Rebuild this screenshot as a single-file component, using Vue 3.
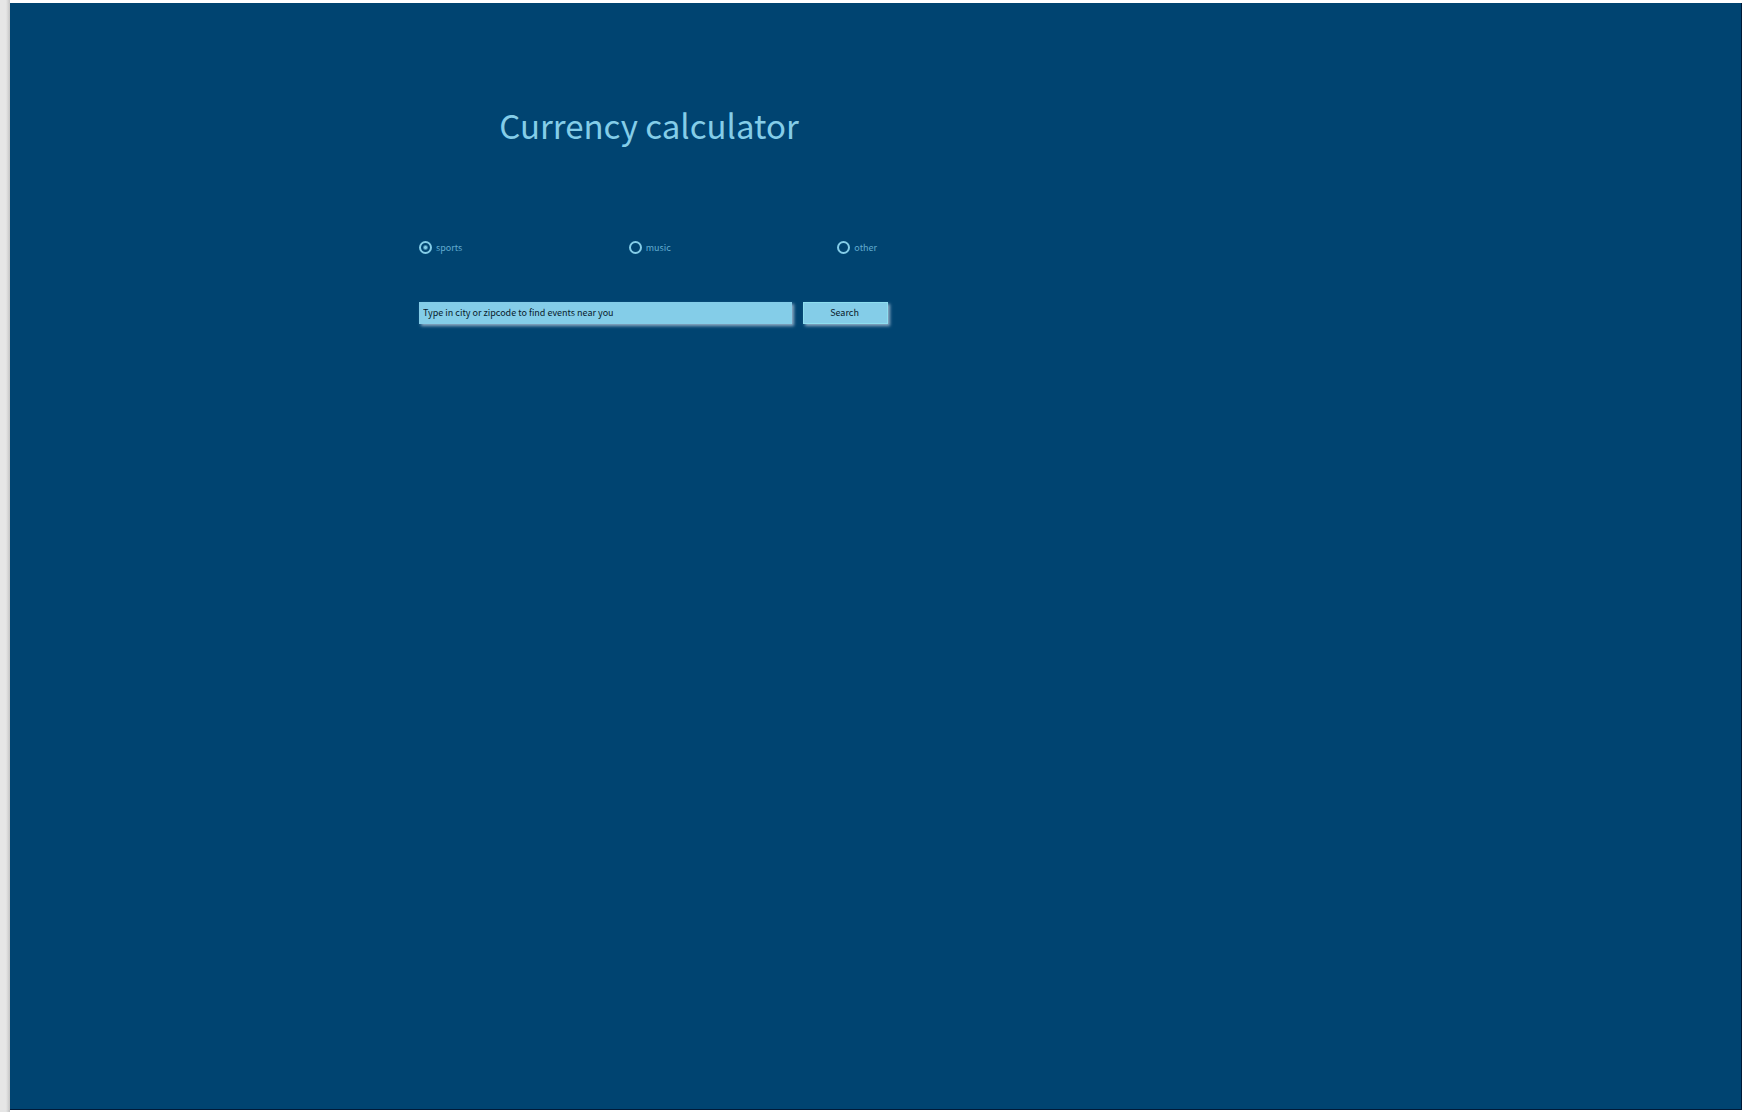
<script setup>
import { ref } from 'vue'

const categories = ['sports', 'music', 'other']
const category = ref('sports')
const place = ref('')
</script>

<template>
  <div class="desk">
    <main class="page">
      <form class="finder" @submit.prevent>
        <h1>Currency calculator</h1>
        <div class="choices" role="radiogroup" aria-label="Event type">
          <label v-for="item in categories" :key="item">
            <input v-model="category" type="radio" name="category" :value="item" />
            <span>{{ item }}</span>
          </label>
        </div>
        <div class="search">
          <input
            v-model="place"
            type="text"
            aria-label="City or zipcode"
            placeholder="Type in city or zipcode to find events near you"
          />
          <button type="submit">Search</button>
        </div>
      </form>
    </main>
  </div>
</template>

<style>
body {
  margin: 0;
}
</style>

<style scoped>
.desk {
  box-sizing: border-box;
  display: flex;
  min-height: 100vh;
  padding: 3px 2px 2px 10px;
  background: linear-gradient(to right, #e6e6e6 6px, #c4c4c4 10px, #fff 10px);
  font-family: "Noto Sans CJK SC", "Noto Sans", sans-serif;
}

.page {
  box-sizing: border-box;
  flex: 1;
  padding: 96px 0 0 409px;
  border: solid #001a38;
  border-width: 0 1px 1px 0;
  background: #004471;
}

.finder {
  width: 469px;
  color: #84cde8;
}

h1 {
  margin: 0 0 88px;
  padding-right: 9px;
  font-size: 33px;
  font-weight: 400;
  line-height: 52px;
  text-align: center;
}

.choices {
  display: flex;
  justify-content: space-between;
  margin-bottom: 46px;
  padding-right: 11px;
  font-size: 9px;
  line-height: 17px;
}

.choices label {
  display: flex;
  align-items: center;
  gap: 4px;
  color: #62acd0;
}

.choices input {
  box-sizing: border-box;
  width: 13px;
  height: 13px;
  margin: 0;
  border: 2px solid #84cde8;
  border-radius: 50%;
  appearance: none;
}

.choices input:checked {
  background: radial-gradient(circle, #84cde8 1px, transparent 3px);
}

.search {
  display: flex;
  gap: 11px;
}

.search input,
.search button {
  box-sizing: border-box;
  height: 22px;
  margin: 0;
  border: 0;
  border-radius: 0;
  background: #84cde8;
  box-shadow: 2px 2px 3px #8fadc6;
  color: #08202c;
  font-family: inherit;
  font-size: 9px;
  line-height: 16px;
}

.search input {
  flex: 1;
  min-width: 0;
  padding: 0 4px 2px;
}

.search input::placeholder {
  color: #08202c;
  opacity: 1;
}

.search button {
  width: 85px;
  padding: 0 2px 0 0;
  border: 1px solid #8edff0;
}
</style>
